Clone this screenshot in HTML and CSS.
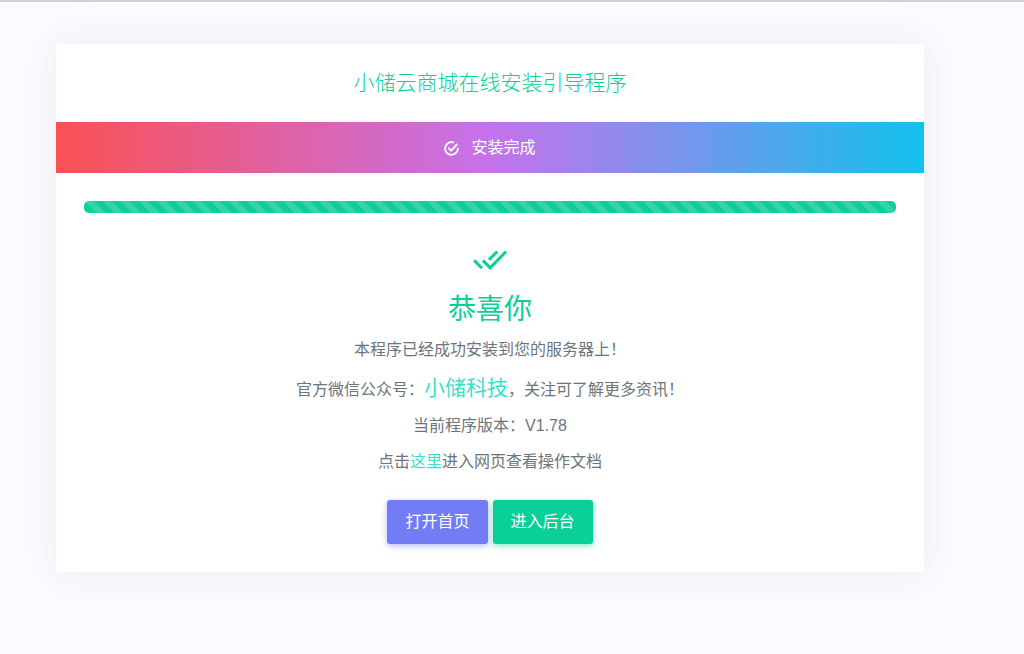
FILE: index.html
```
<!DOCTYPE html>
<html lang="zh-CN">

<head>
    <meta charset="UTF-8">
    <meta name="viewport" content="width=device-width, initial-scale=1.0">
    <title>小储云商城在线安装引导程序</title>
    <link rel="stylesheet" href="styles.css">
</head>

<body>
    <main class="card">
        <h1 class="card-title">小储云商城在线安装引导程序</h1>

        <div class="step">
            <svg class="step-icon" viewBox="0 0 16 16" aria-hidden="true">
                <path d="M14.7 7A6.8 6.8 0 1 1 10.6 1.7" />
                <path d="M4.6 7.2L7.6 10.2L14.2 3.2" />
            </svg>
            <span>安装完成</span>
        </div>

        <div class="card-body">
            <div class="progress">
                <div class="progress-bar"></div>
            </div>

            <svg class="done-icon" viewBox="0 0 34 20" aria-hidden="true">
                <path d="M1.2 10.4L9 18.2" />
                <path d="M9.8 10.4L17.2 17.8L33 1.6" />
                <path d="M16 9.8L24.2 1.6" />
            </svg>
            <h2 class="done-title">恭喜你</h2>

            <p>本程序已经成功安装到您的服务器上！</p>
            <p>官方微信公众号：<span class="brand">小储科技</span>，关注可了解更多资讯！</p>
            <p>当前程序版本：V1.78</p>
            <p>点击<a href="#">这里</a>进入网页查看操作文档</p>

            <div class="buttons">
                <button type="button" class="btn btn-primary">打开首页</button>
                <button type="button" class="btn btn-success">进入后台</button>
            </div>
        </div>
    </main>
</body>

</html>
```
FILE: styles.css
```
* {
    box-sizing: border-box;
}

body {
    margin: 0;
    padding: 42px 100px 42px 56px;
    border-top: 2px solid #d0d0d0;
    background: #fafbfe;
    color: #6c757d;
    font-family: "Liberation Sans", "Noto Sans CJK SC", sans-serif;
    font-size: 16px;
    line-height: 24px;
}

.card {
    background: #fff;
    border-radius: 4px;
    box-shadow: 0 0 42px 0 rgba(154, 161, 171, 0.15);
    text-align: center;
}

.card-title {
    margin: 0;
    padding: 24px;
    color: #0acf97;
    font-size: 21px;
    font-weight: 300;
    line-height: 30px;
}

.step {
    display: flex;
    justify-content: center;
    align-items: center;
    gap: 12px;
    padding: 14px 14px 13px;
    background: linear-gradient(to right, #fa5055, #c572eb 50%, #12c2ec);
    color: #fff;
    line-height: 24px;
}

.step-icon {
    width: 15px;
    height: 15px;
    fill: none;
    stroke: currentColor;
    stroke-width: 2;
}

.card-body {
    padding: 28px;
}

.progress {
    height: 12px;
    margin-bottom: 37px;
    border-radius: 5px;
    background: #eef2f7;
    overflow: hidden;
}

.progress-bar {
    height: 100%;
    background-color: #0acf97;
    background-image: linear-gradient(45deg, rgba(255, 255, 255, 0.15) 25%, transparent 25%, transparent 50%, rgba(255, 255, 255, 0.15) 50%, rgba(255, 255, 255, 0.15) 75%, transparent 75%, transparent);
    background-size: 18px 18px;
}

.done-icon {
    display: block;
    width: 34px;
    height: 20px;
    margin: 0 auto 22px;
    fill: none;
    stroke: #0acf97;
    stroke-width: 3;
}

.done-title {
    margin: 0 0 10px;
    color: #0acf97;
    font-size: 28px;
    font-weight: 400;
    line-height: 36px;
}

p {
    margin: 0 0 12px;
}

.brand {
    font-size: 21px;
    line-height: 28px;
}

.brand,
a {
    color: #39dfc9;
    text-decoration: none;
}

.buttons {
    display: flex;
    justify-content: center;
    gap: 5px;
    padding-top: 14px;
}

.btn {
    padding: 10px 18px;
    border: 0;
    border-radius: 3px;
    color: #fff;
    font: inherit;
    cursor: pointer;
}

.btn-primary {
    background: #727cf5;
    box-shadow: 0 2px 6px 0 rgba(114, 124, 245, 0.5);
}

.btn-success {
    background: #0acf97;
    box-shadow: 0 2px 6px 0 rgba(10, 207, 151, 0.5);
}
```
